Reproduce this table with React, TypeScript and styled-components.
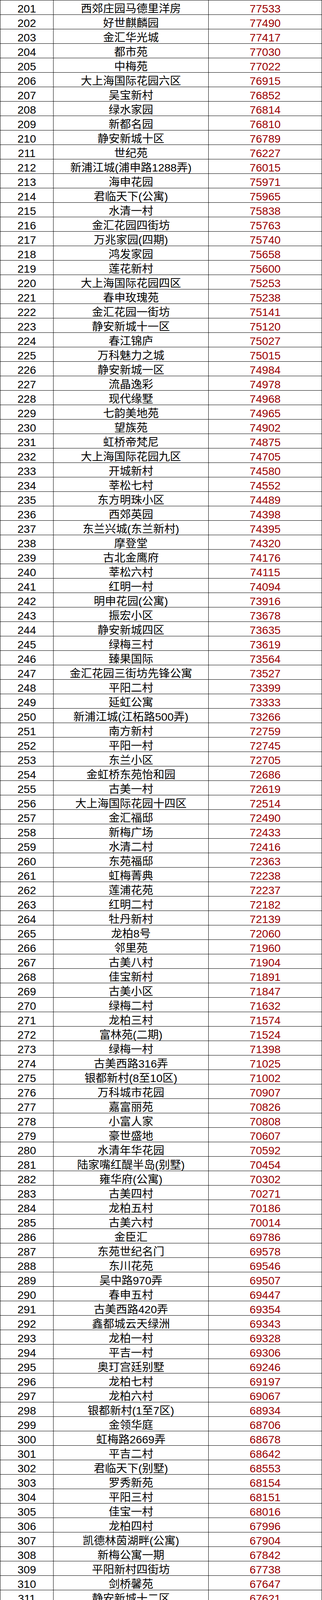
import React from "react";
import styled, { createGlobalStyle } from "styled-components";

const GlobalStyle = createGlobalStyle`
  html, body {
    margin: 0;
    padding: 0;
    background: #ffffff;
  }
  body {
    font-family: "Liberation Sans", "Noto Sans CJK SC", sans-serif;
  }
  * {
    box-sizing: border-box;
  }
`;

const RAW = `西郊庄园马德里洋房 77533
好世麒麟园 77490
金汇华光城 77417
都市苑 77030
中梅苑 77022
大上海国际花园六区 76915
吴宝新村 76852
绿水家园 76814
新都名园 76810
静安新城十区 76789
世纪苑 76227
新浦江城(浦申路1288弄) 76015
海申花园 75971
君临天下(公寓) 75965
水清一村 75838
金汇花园四街坊 75763
万兆家园(四期) 75740
鸿发家园 75658
莲花新村 75600
大上海国际花园四区 75253
春申玫瑰苑 75238
金汇花园一街坊 75141
静安新城十一区 75120
春江锦庐 75027
万科魅力之城 75015
静安新城一区 74984
流晶逸彩 74978
现代缘墅 74968
七韵美地苑 74965
望族苑 74902
虹桥帝梵尼 74875
大上海国际花园九区 74705
开城新村 74580
莘松七村 74552
东方明珠小区 74489
西郊英园 74398
东兰兴城(东兰新村) 74395
摩登堂 74320
古北金鹰府 74176
莘松六村 74115
红明一村 74094
明申花园(公寓) 73916
振宏小区 73678
静安新城四区 73635
绿梅三村 73619
臻果国际 73564
金汇花园三街坊先锋公寓 73527
平阳二村 73399
延虹公寓 73333
新浦江城(江柘路500弄) 73266
南方新村 72759
平阳一村 72745
东兰小区 72705
金虹桥东苑怡和园 72686
古美一村 72619
大上海国际花园十四区 72514
金汇福邸 72490
新梅广场 72433
水清二村 72416
东苑福邸 72363
虹梅菁典 72238
莲浦花苑 72237
红明二村 72182
牡丹新村 72139
龙柏8号 72060
邻里苑 71960
古美八村 71904
佳宝新村 71891
古美小区 71847
绿梅二村 71632
龙柏三村 71574
富林苑(二期) 71524
绿梅一村 71398
古美西路316弄 71025
银都新村(8至10区) 71002
万科城市花园 70907
嘉富丽苑 70826
小富人家 70808
豪世盛地 70607
水清年华花园 70592
陆家嘴红醍半岛(别墅) 70454
雍华府(公寓) 70302
古美四村 70271
龙柏五村 70186
古美六村 70014
金臣汇 69786
东苑世纪名门 69578
东川花苑 69546
吴中路970弄 69507
春申五村 69447
古美西路420弄 69354
鑫都城云天绿洲 69343
龙柏一村 69328
平吉一村 69306
奥玎宫廷别墅 69246
龙柏七村 69197
龙柏六村 69067
银都新村(1至7区) 68934
金领华庭 68706
虹梅路2669弄 68678
平吉二村 68642
君临天下(别墅) 68553
罗秀新苑 68154
平阳三村 68151
佳宝一村 68016
龙柏四村 67996
凯德林茵湖畔(公寓) 67904
新梅公寓一期 67842
平阳新村四街坊 67738
剑桥馨苑 67647
静安新城十二区 67621
东苑佳佳花园 67487
天恒名城 67480
古美七村 67339
水清三村 67325
古美五村 67261
当代万国府MOMA 67194
盛园(公寓) 67167
金铭文博水景(别墅) 67037
金俊苑 67004
万兆家园(二期)(公寓) 66993
莘中新村 66983
莲花公寓(闵行) 66927
颛溪十村 66823
金球花园 66753
龙柏四村三小区 66723
黎明花园 66554
凤凰景苑 66541
罗秀苑 66479
金都花好悦园 66318
华光花园 66098
莘城公寓 66015
惠明苑 65954
上虹新村 65935
绿茵苑(闵行) 65934
华莘花园 65831
上海星河湾 65744
东兰雅苑 65631
新梅花苑 65334
龙柏二村 65119
丽华公寓(公寓) 65093
沁春园三村 65064
报春一村 65041
环镇西路39、41弄 64985
春申府邸 64982
鑫都城仁和花苑 64954
金铭文博水景(公寓) 64801
好世樱园 64692
名仕世家花苑 64688
欧香名邸 64629
罗锦新苑 64619
浦江世博家园四街坊 64562
鑫都城紫云华庭 64547
西环一村 64495
正峰苑 64437
东航明珠公寓 64382
虹梅路2759弄 64278
新华红星国际广场 64270
鑫峰苑 64249
天籁园 64130
鸿禧花园 64127
明泉公寓 64023
虹梅路2806弄 63993
华光公寓 63955
金坤花园 63950
长寿新村(闵行) 63948
盛源花园 63914
朱行三村 63867
罗阳七村(华宝小区) 63810
虹井小区 63546
江南欣苑(闵行) 63452
春申城四季苑 63420
龙柏公寓 63346
一品漫城(一期)(别墅) 63225
罗阳七村(三洲花园) 62846
南洋博仕欣居 62781
南国花园 62695
莲浦新苑 62581
富林苑(三期) 62578
龙柏易居公寓 62519
众众德尚世嘉 62323
金球怡云花园 62297
湖山在望花园 62269
景和茗苑 62185
品家都市星城 62176
虹桥明珠公寓 62098
宝安新苑 62003
好第坊(公寓) 61867
新明星花园 61797
佳信花苑 61728
报春二村 61625
丹桂南苑 61582
万科公园大道 61574
都市宜家苑 61554
罗阳一村 61548
万科七宝国际 61542
梅陇二村 61539
江南苑 61456
银都名墅 61417
半岛豪门(别墅) 61327`;

const rows = RAW.split("\n").map((line, i) => {
  const [name, price] = line.split(" ");
  return { rank: 201 + i, name, price };
});

// whole sheet: top and left grid lines, rows stack below
const Sheet = styled.div`
  width: 824px;
  border-top: 1px solid #000000;
  border-left: 1px solid #000000;
  background: #ffffff;
`;

const Row = styled.div`
  display: grid;
  grid-template-columns: 136px 397px 290px;
  height: 37px;
  border-bottom: 1px solid #000000;
`;

const Cell = styled.div<{ $red?: boolean }>`
  display: flex;
  align-items: flex-end;
  justify-content: center;
  height: 36px;
  border-right: 1px solid #000000;
  white-space: nowrap;
  font-family: "Liberation Sans", "Noto Sans CJK SC", sans-serif;
  font-size: 28.5px;
  line-height: 30px;
  color: ${(p) => (p.$red ? "#9c0000" : "#000000")};
`;

const App = () => {
  return (
    <>
      <GlobalStyle />
      <Sheet>
        {rows.map((r) => (
          <Row key={r.rank}>
            <Cell>{r.rank}</Cell>
            <Cell>{r.name}</Cell>
            <Cell $red>{r.price}</Cell>
          </Row>
        ))}
      </Sheet>
    </>
  );
};

export default App;
